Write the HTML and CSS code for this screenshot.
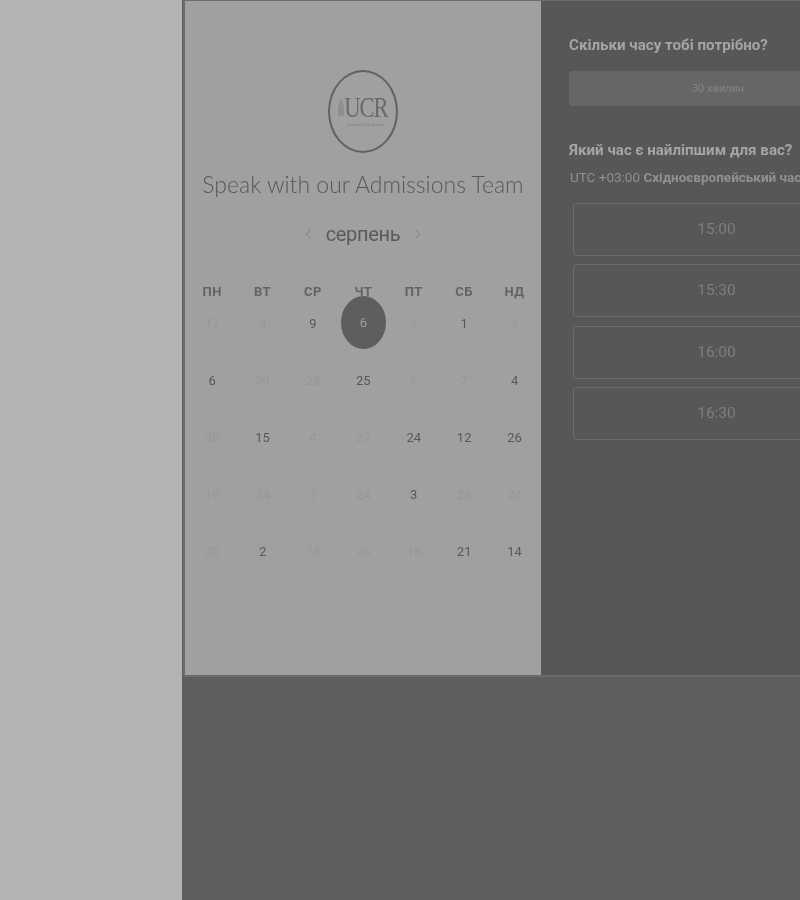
FILE: index.html
```html
<!DOCTYPE html>
<html lang="uk">
<head>
<meta charset="utf-8">
<title>Speak with our Admissions Team</title>
<link rel="stylesheet" href="styles.css">
</head>
<body>
<div class="page">
  <aside class="sidebar"></aside>
  <main class="main">
    <section class="card">
      <div class="cal-panel">
        <div class="logo">
          <svg class="logo-tower" width="6" height="19" viewBox="0 0 6 19"><path d="M3 0 L4 5 L6 9 V19 H0 V9 L2 5 Z"/></svg>
          <div class="logo-mark">UCR</div>
          <div class="logo-sub">University College Rockford</div>
        </div>
        <h1 class="title">Speak with our Admissions Team</h1>
        <div class="month-row">
          <svg class="chev" width="5" height="10" viewBox="0 0 5 10"><path d="M4.5 .5 L.5 5 L4.5 9.5"/></svg>
          <span class="month">серпень</span>
          <svg class="chev" width="5" height="10" viewBox="0 0 5 10"><path d="M.5 .5 L4.5 5 L.5 9.5"/></svg>
        </div>
        <div class="weekdays">
          <span>ПН</span><span>ВТ</span><span>СР</span><span>ЧТ</span><span>ПТ</span><span>СБ</span><span>НД</span>
        </div>
        <div class="days">
          <span class="off">17</span><span class="off">3</span><span>9</span><span class="sel"><b>6</b></span><span class="off">3</span><span>1</span><span class="off">3</span>
          <span>6</span><span class="off">30</span><span class="off">28</span><span>25</span><span class="off">6</span><span class="off">7</span><span>4</span>
          <span class="off">30</span><span>15</span><span class="off">4</span><span class="off">27</span><span>24</span><span>12</span><span>26</span>
          <span class="off">19</span><span class="off">24</span><span class="off">2</span><span class="off">24</span><span>3</span><span class="off">26</span><span class="off">24</span>
          <span class="off">20</span><span>2</span><span class="off">13</span><span class="off">26</span><span class="off">15</span><span>21</span><span>14</span>
        </div>
      </div>
      <div class="time-panel">
        <h2 class="q q-first">Скільки часу тобі потрібно?</h2>
        <div class="duration">30 хвилин</div>
        <h2 class="q q-second">Який час є найліпшим для вас?</h2>
        <p class="tz">UTC +03:00 <strong>Східноєвропейський час</strong></p>
        <div class="slots">
          <div class="slot">15:00</div>
          <div class="slot">15:30</div>
          <div class="slot">16:00</div>
          <div class="slot">16:30</div>
        </div>
      </div>
    </section>
  </main>
</div>
</body>
</html>
```
FILE: styles.css
```css
* { box-sizing: border-box; }
html, body { margin: 0; padding: 0; height: 100%; overflow: hidden; }
body { background: #5e5e5e; font-family: Roboto, "Liberation Sans", sans-serif; }
.page { display: flex; width: 800px; height: 900px; overflow: hidden; filter: blur(0.5px); }
.sidebar { flex: 0 0 182px; background: #b3b3b3; }
.main { flex: 1 1 auto; min-width: 0; background: #5e5e5e; overflow: hidden; }
.card { display: flex; width: 760px; height: 677px; margin-left: 1px; border: solid #6c6c6c; border-width: 1px 0 2px 2px; background: #575757; }
.cal-panel { flex: 0 0 356px; height: 674px; background: #a0a0a0; display: flex; flex-direction: column; align-items: center; padding-top: 69px; }
.logo { position: relative; width: 70px; height: 83px; border: 2.5px solid #626262; border-radius: 50%; display: flex; flex-direction: column; align-items: center; padding-top: 24px; }
.logo-mark { font-family: "Liberation Serif", serif; font-size: 29px; line-height: 22px; letter-spacing: -1.5px; color: #6a6a6a; padding-left: 7px; transform: scaleX(0.78); }
.logo-sub { font-family: "Liberation Sans", sans-serif; font-size: 3px; line-height: 4px; margin-top: 5px; color: #818181; white-space: nowrap; padding-left: 5px; }
.logo-tower { position: absolute; left: 8px; top: 25px; fill: #8e8e8e; }
.title { margin: 16px 0 0; font-family: Lato, sans-serif; font-weight: 300; font-size: 23px; line-height: 30px; color: #585858; white-space: nowrap; }
.month-row { display: flex; align-items: center; gap: 15px; margin-top: 21px; height: 28px; }
.month { font-size: 20px; letter-spacing: -0.3px; color: #5a5a5a; }
.chev { fill: none; stroke: #808080; stroke-width: 1; }
.weekdays, .days { display: grid; grid-template-columns: repeat(7, 50.4px); width: 353px; margin-left: 1px; justify-items: center; align-items: center; }
.weekdays { margin-top: 33px; height: 20px; font-size: 13px; font-weight: 700; color: #636363; letter-spacing: 0.5px; }
.days { grid-auto-rows: 57px; font-size: 13px; color: #585858; margin-top: -6px; }
.days .off { color: #979797; }
.sel { display: flex; align-items: center; justify-content: center; width: 45px; height: 53px; margin-bottom: 2px; border-radius: 50%; background: #5e5e5e; color: #a0a0a0; }
.sel b { font-weight: 400; }
.time-panel { flex: 1 1 auto; padding: 35px 0 0 28px; }
.q { margin: 0; font-size: 15.15px; line-height: 18px; font-weight: 700; color: #a4a4a4; white-space: nowrap; }
.duration { width: 298px; height: 35px; margin-top: 17px; border-radius: 3px; background: #666; color: #848484; font-size: 11px; display: flex; align-items: center; justify-content: center; }
.q-second { margin-top: 35px; }
.tz { margin: 10px 0 0 1px; font-size: 13.5px; line-height: 16px; color: #909090; white-space: nowrap; }
.tz strong { font-weight: 700; }
.slots { display: flex; flex-direction: column; gap: 8.33px; margin: 18px 0 0 4px; }
.slot { width: 287px; height: 53px; border: 1px solid #6b6b6b; border-radius: 3px; color: #7e7e7e; font-size: 15.5px; padding-bottom: 1px; display: flex; align-items: center; justify-content: center; }
```
